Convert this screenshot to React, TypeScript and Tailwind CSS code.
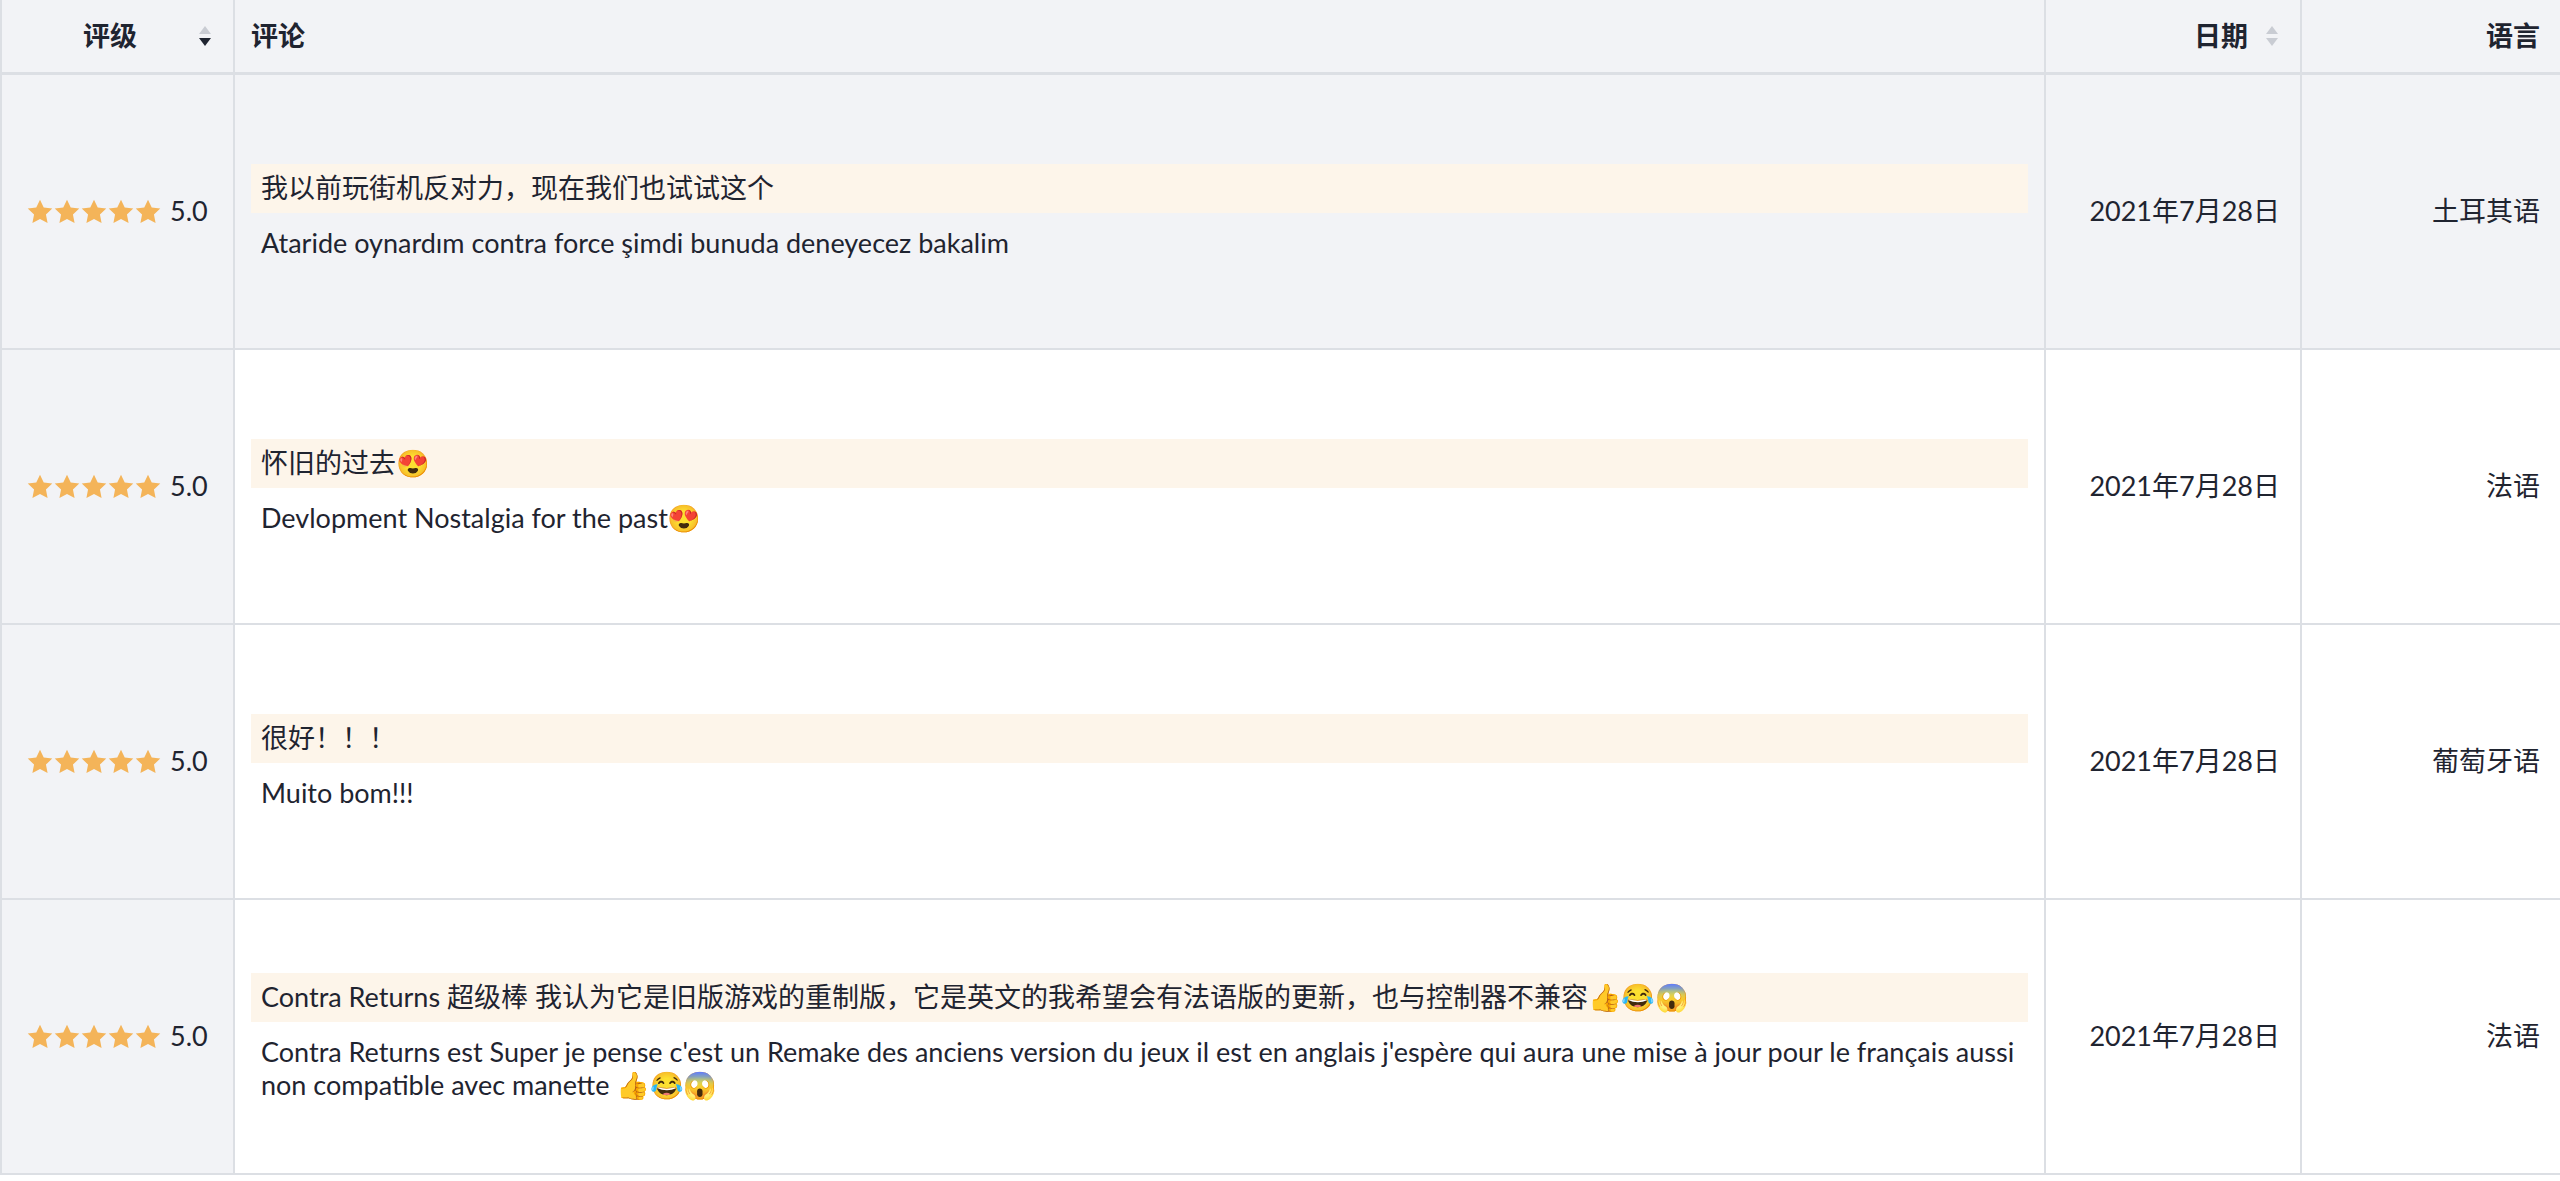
import React from "react";

const rows = [
  { zh: "我以前玩街机反对力，现在我们也试试这个", orig: "Ataride oynardım contra force şimdi bunuda deneyecez bakalim", lang: "土耳其语", hl: true },
  { zh: "怀旧的过去😍", orig: "Devlopment Nostalgia for the past😍", lang: "法语" },
  { zh: "很好！！！", orig: "Muito bom!!!", lang: "葡萄牙语" },
  { zh: "Contra Returns 超级棒 我认为它是旧版游戏的重制版，它是英文的我希望会有法语版的更新，也与控制器不兼容👍😂😱", orig: "Contra Returns est Super je pense c'est un Remake des anciens version du jeux il est en anglais j'espère qui aura une mise à jour pour le français aussi non compatible avec manette 👍😂😱", lang: "法语" },
];

const Star = () => (
  <svg width="28" height="28" viewBox="0 0 24 24"><path fill="#f4b459" d="M12 1.5l3.2 6.7 7.3.9-5.4 5.1 1.4 7.3L12 17.9l-6.5 3.6 1.4-7.3-5.4-5.1 7.3-.9z"/></svg>
);

const Sort = ({ active }: { active?: boolean }) => (
  <svg width="16" height="28" viewBox="0 0 16 28" className="ml-[16px]">
    <path d="M8 4l6 8H2z" fill="#c9ccd3" />
    <path d="M8 24l6-8H2z" fill={active ? "#1f2430" : "#c9ccd3"} />
  </svg>
);

export default function App() {
  const font = { fontFamily: 'Lato, "Noto Sans CJK SC", "Noto Color Emoji", sans-serif' };
  return (
    <div className="w-[2560px] bg-white text-[#1f2430] text-[27px]" style={font}>
      <div className="grid grid-cols-[235px_1811px_256px_1fr] h-[75px] bg-[#f2f3f6] border-b-[3px] border-[#dcdfe4] font-bold">
        <div className="flex items-center justify-end pr-[20px] border-r-2 border-[#dcdfe4] border-l-2"><span className="mr-[44px]">评级</span><Sort active /></div>
        <div className="flex items-center pl-[16px] border-r-2 border-[#dcdfe4]">评论</div>
        <div className="flex items-center justify-end pr-[20px] border-r-2 border-[#dcdfe4]">日期<Sort /></div>
        <div className="flex items-center justify-end pr-[20px]">语言</div>
      </div>
      {rows.map((r, i) => (
        <div key={i} className={`grid grid-cols-[235px_1811px_256px_1fr] h-[275px] border-b-2 border-[#dcdfe4] ${r.hl ? "bg-[#f2f3f6]" : "bg-white"}`}>
          <div className="flex items-center pl-[24px] gap-[8px] bg-[#f2f3f6] border-r-2 border-l-2 border-[#dcdfe4]">
            <div className="flex -space-x-[1px]">{[0,1,2,3,4].map(k => <Star key={k} />)}</div>
            <span>5.0</span>
          </div>
          <div className="flex flex-col justify-center px-[16px] border-r-2 border-[#dcdfe4]">
            <div className="bg-[#fdf5ea] h-[49px] flex items-center px-[10px] mb-[13px]">{r.zh}</div>
            <div className="px-[10px] leading-[33px]">{r.orig}</div>
          </div>
          <div className="flex items-center justify-end pr-[20px] border-r-2 border-[#dcdfe4]">2021年7月28日</div>
          <div className="flex items-center justify-end pr-[20px]">{r.lang}</div>
        </div>
      ))}
    </div>
  );
}
